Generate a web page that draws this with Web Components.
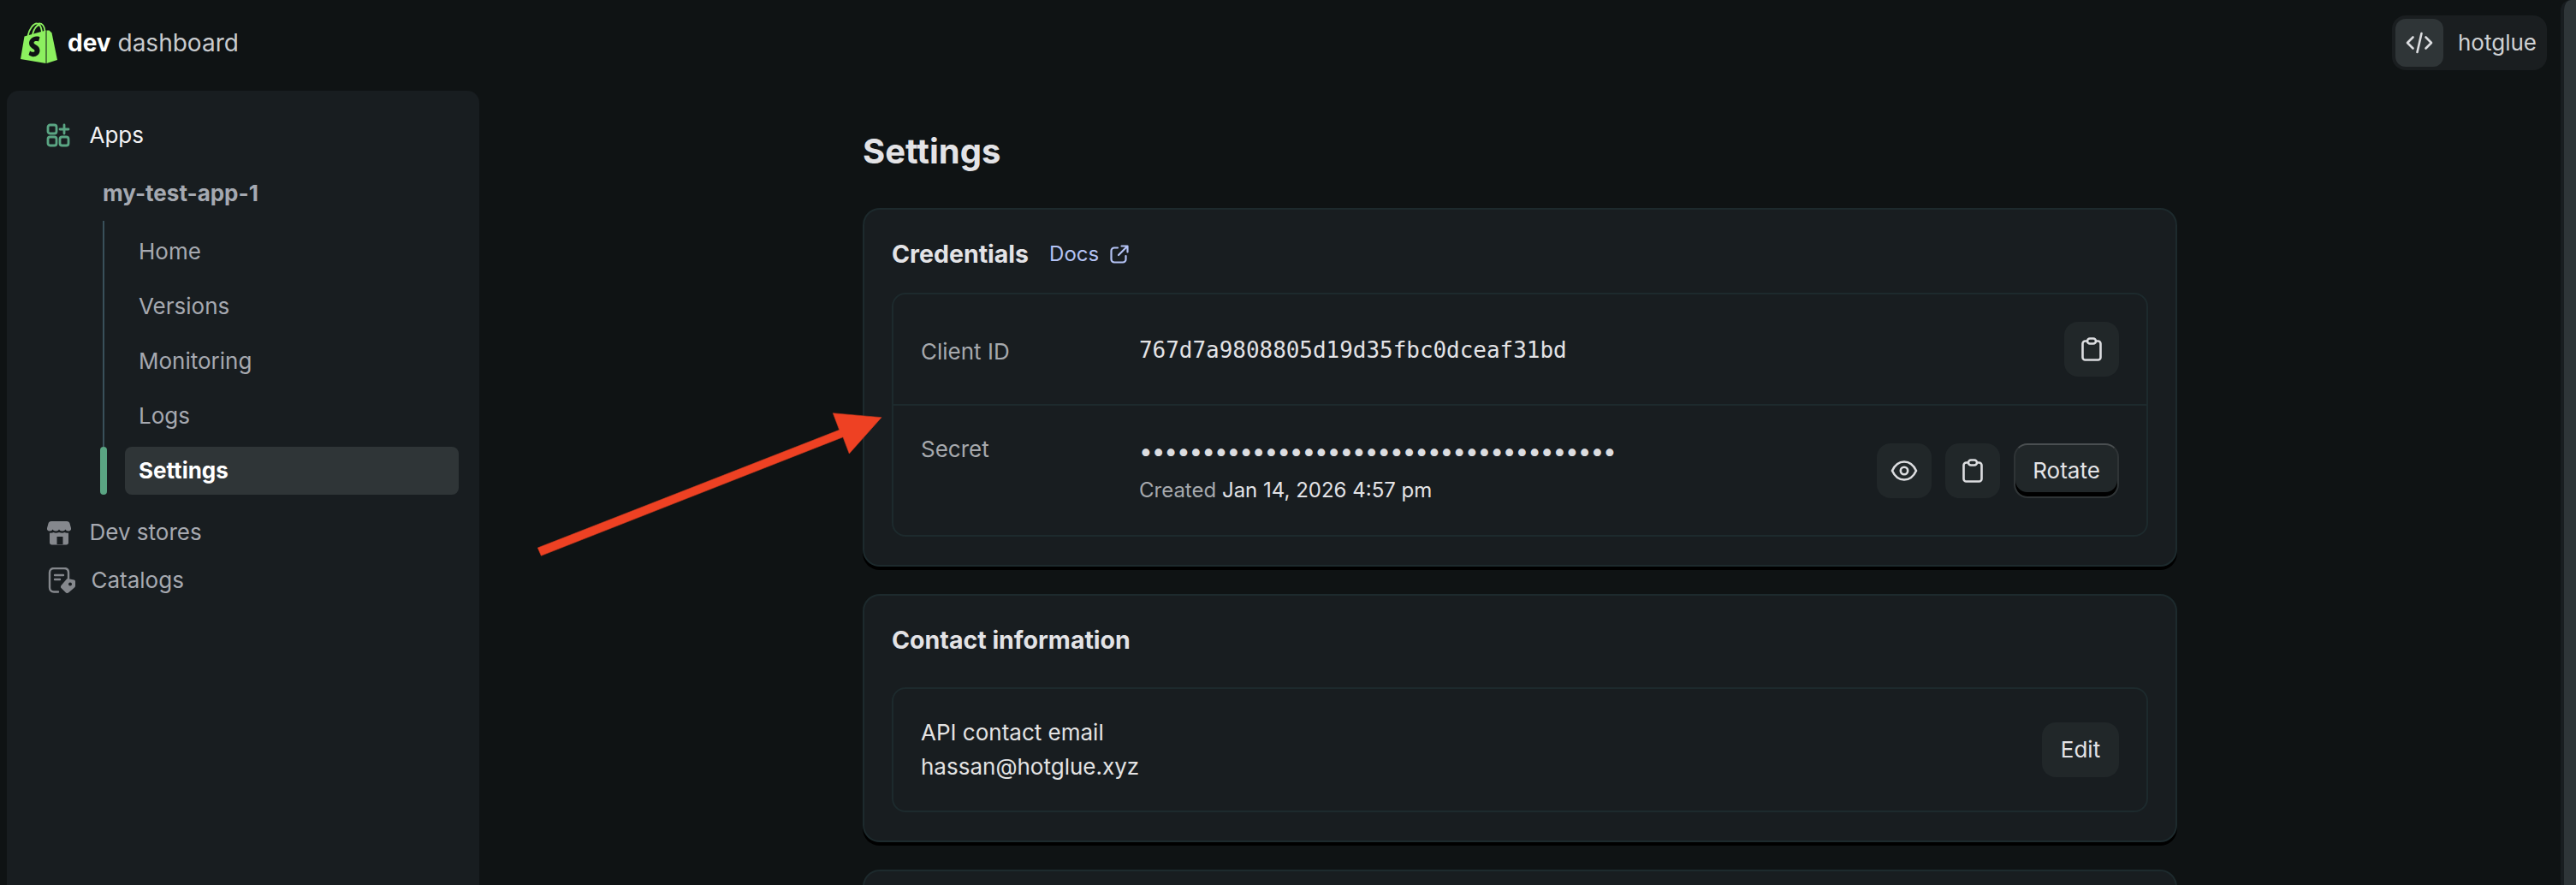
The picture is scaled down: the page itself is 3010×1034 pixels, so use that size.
<!doctype html>
<html>
<head>
<meta charset="utf-8">
<title>Settings</title>
<style>
  html, body { margin: 0; height: 100%; overflow: hidden; background: #0f1314; }
  body { font-family: Inter, "Liberation Sans", sans-serif; font-size: 26px; line-height: 40px; color: #e3e3e3; }
</style>
</head>
<body>

<template id="dash-shell-tpl">
  <style>
    :host { display: block; position: relative; width: 3010px; height: 1034px; overflow: hidden; }
    .top { display: flex; align-items: center; justify-content: space-between; height: 106px; padding: 0 34px 6px 24px; box-sizing: border-box; }
    .body { display: flex; padding-left: 8px; height: 928px; }
    .main { padding-left: 448px; }
    .edge { position: absolute; right: 0; top: 0; width: 18px; height: 1034px; box-sizing: border-box; background: #2e3538; border-left: 4px solid #181d20; border-top-left-radius: 12px; }
    .arrow { position: absolute; left: 0; top: 0; pointer-events: none; }
  </style>
  <div class="top"><slot name="logo"></slot><slot name="org"></slot></div>
  <div class="body"><slot name="side"></slot><div class="main"><slot></slot></div></div>
  <div class="edge"></div>
  <svg class="arrow" width="3010" height="1034"><polygon fill="#ee4123" stroke="#c93a20" stroke-width=".6" points="628.3,640 980.7,502.3 973.3,482.7 1030,487.7 992.3,530 985,510.7 632.3,649.3"/></svg>
</template>

<template id="dash-logo-tpl">
  <style>
    :host { display: flex; align-items: center; gap: 12px; font-size: 28px; line-height: 40px; color: #c9cbce; }
    svg { display: block; }
    b { font-weight: 700; color: #fff; }
  </style>
  <svg width="43" height="48" viewBox="0 0 43 48">
    <g fill="none" stroke="#8cf05f" stroke-width="1.800">
      <path d="M8.500 16C10 8 15 1.500 19 1.500 22 1.500 24 4 25 11"/>
      <path d="M14 14C16 7 19 3.500 22 3"/>
      <path d="M21 1.500C26 1 28 6 28.500 10.500"/>
    </g>
    <path fill="#8cf05f" d="M4.500 16.500 29.500 9.500V48L0 43Z"/>
    <path fill="#8cf05f" d="M30.500 9.500H33.500L36.500 12.500 43 44 30.500 48Z"/>
    <path fill="#0f1314" transform="translate(-1.500 0)" d="M24 17.500 L22.500 22.500 C20 21.500 17 22 17 24 C17 26 24 27 24 33 C24 38 19 41 15 40 C13 39.500 11.500 38.500 11 38 L12.500 33.500 C14 34.500 17.500 36 18 33.500 C18 31 11.500 30 11.500 24.500 C11.500 20 16 16 21 16.500 C22.500 16.500 23.500 17 24 17.500 Z"/>
  </svg>
  <span><b>dev</b> dashboard</span>
</template>

<template id="dash-org-tpl">
  <style>
    :host { display: flex; align-items: center; box-sizing: border-box; width: 181px; height: 64px; padding: 4px; gap: 17px; background: #1a1e20; border-radius: 16px; font-size: 26px; color: #cfd1d3; }
    .ic { width: 56px; height: 56px; border-radius: 12px; background: #2f3537; display: flex; align-items: center; justify-content: center; }
  </style>
  <div class="ic">
    <svg width="32" height="26" viewBox="0 0 32 26" fill="none" stroke="#dcdde0" stroke-width="2.600" stroke-linecap="round" stroke-linejoin="round"><path d="M8.500 6.500 2 13l6.500 6.500M23.500 6.500 30 13l-6.500 6.500M18.500 2l-5 22"/></svg>
  </div>
  <slot></slot>
</template>

<template id="dash-sidebar-tpl">
  <style>
    :host { display: block; box-sizing: border-box; width: 552px; height: 1000px; background: #181d20; border-radius: 14px; padding: 32px 24px 0 0; }
  </style>
  <slot></slot>
</template>

<template id="dash-top-item-tpl">
  <style>
    :host { display: flex; align-items: center; height: 40px; color: #a6a9b0; }
    .ic { width: 96.500px; padding-left: 46px; box-sizing: border-box; flex: none; display: flex; }
    :host([current]) { color: #f2f2f3; }
  </style>
  <div class="ic"><slot name="icon"></slot></div>
  <slot></slot>
</template>

<template id="dash-sub-nav-tpl">
  <style>
    :host { display: block; margin: 0 0 0 112px; }
    .title { height: 40px; margin: 28px 0 12px; font-weight: 700; color: #a5a9b1; }
    .list { display: flex; flex-direction: column; position: relative; }
    .list::before { content: ""; position: absolute; left: 0; top: 0; bottom: 56px; width: 2px; background: #39505a; }
  </style>
  <div class="title"><slot name="title"></slot></div>
  <div class="list"><slot></slot></div>
</template>

<template id="dash-sub-item-tpl">
  <style>
    :host { display: block; height: 56px; margin-top: 8px; box-sizing: border-box; position: relative; color: #a6a9b0; }
    :host(:first-child) { margin-top: 0; }
    .row { margin-left: 26px; height: 56px; padding-left: 16px; display: flex; align-items: center; border-radius: 8px; }
    :host([current]) .row { background: #2f3537; color: #fff; font-weight: 700; }
    :host([current])::before { content: ""; position: absolute; left: -3px; top: 0; width: 8px; height: 56px; border-radius: 4px; background: #5aa583; }
  </style>
  <div class="row"><slot></slot></div>
</template>

<template id="dash-card-tpl">
  <style>
    :host { display: block; box-sizing: border-box; width: 1536px; margin-bottom: 32px; padding: 32px 32px 33px; background: #181d20; border: 2px solid #1d2a2d; border-radius: 20px; box-shadow: 0 4px 0 #000; }
    .head { display: flex; align-items: center; gap: 24px; height: 40px; margin-bottom: var(--head-gap, 25px); font-weight: 700; font-size: 28.500px; color: #e3e3e6; }
  </style>
  <div class="head"><slot name="title"></slot><slot name="extra"></slot></div>
  <slot></slot>
</template>

<template id="dash-box-tpl">
  <style>
    :host { display: block; border: 2px solid #1d2a2d; border-radius: 16px; }
  </style>
  <slot></slot>
</template>

<template id="dash-row-tpl">
  <style>
    :host { display: flex; align-items: center; box-sizing: border-box; padding: 0 32px; height: var(--h, 130px); }
    :host(:not(:last-child)) { border-bottom: 2px solid #1d2a2d; }
    .label { width: 255px; flex: none; color: #a6a9ad; align-self: var(--la, center); padding-top: var(--lp, 6px); }
    .value { flex: 1; }
    .act { display: flex; gap: 16px; }
  </style>
  <div class="label"><slot name="label"></slot></div>
  <div class="value"><slot></slot></div>
  <div class="act"><slot name="actions"></slot></div>
</template>

<template id="dash-button-tpl">
  <style>
    :host { display: flex; align-items: center; justify-content: center; box-sizing: border-box; height: 64px; min-width: 64px; padding: 0; border-radius: 16px; background: #212729; color: #e3e3e6; font-size: 26px; }
    :host([text]) { width: 90px; }
    :host([raised]) { width: 123px; border: 2px solid #2f3436; border-top-color: #4a4f51; box-shadow: inset 0 -5px 0 #000; }
  </style>
  <slot></slot>
</template>

<dash-shell>
  <dash-logo slot="logo"></dash-logo>
  <dash-org slot="org">hotglue</dash-org>
  <dash-sidebar slot="side">
    <dash-top-item current>
      <svg slot="icon" width="28" height="28" viewBox="0 0 28 28" fill="none" stroke="#5aa583" stroke-width="2.800" stroke-linecap="round"><rect x="2" y="2" width="10" height="10" rx="2.500"/><rect x="2" y="16" width="10" height="10" rx="2.500"/><rect x="16" y="16" width="10" height="10" rx="2.500"/><path d="M21 2v10M16 7h10"/></svg>
      Apps
    </dash-top-item>
    <dash-sub-nav>
      <span slot="title">my-test-app-1</span>
      <dash-sub-item>Home</dash-sub-item>
      <dash-sub-item>Versions</dash-sub-item>
      <dash-sub-item>Monitoring</dash-sub-item>
      <dash-sub-item>Logs</dash-sub-item>
      <dash-sub-item current>Settings</dash-sub-item>
    </dash-sub-nav>
    <dash-top-item style="margin-top:24px">
      <svg slot="icon" width="30" height="30" viewBox="0 0 30 30" fill="#85888d"><path d="M6 2h18c2 0 3 1 3.500 2.500L29 10c.5 2-1 3.500-3 3.500-1.800 0-3-1-3.500-2-.7 1-2 2-3.800 2-1.700 0-3-1-3.700-2-.7 1-2 2-3.700 2-1.800 0-3.100-1-3.800-2-.5 1-1.700 2-3.500 2-2 0-3.500-1.500-3-3.500L2.500 4.500C3 3 4 2 6 2Z"/><path fill-rule="evenodd" d="M4 15.500c1 .3 3 .3 4.500-.5 2 1 3.500 1 6.500 0 3 1 4.500 1 6.500 0 1.500.8 3.500.8 4.500.5V27c0 1.500-1 2.500-2.500 2.500h-17C5 29.500 4 28.500 4 27ZM12.500 20v9h7v-9Z"/></svg>
      Dev stores
    </dash-top-item>
    <dash-top-item style="margin-top:16px">
      <svg slot="icon" width="32" height="30" viewBox="0 0 32 30" fill="none" stroke="#85888d" stroke-width="2.400" stroke-linecap="round" style="margin-left:2px;margin-right:-2px"><path d="M12 28.500H7c-3 0-5-2-5-5V6c0-3 2-5 5-5h12c3 0 5 2 5 5v7"/><path d="M8 9h10M8 14h6"/><path fill="#85888d" stroke="none" fill-rule="evenodd" d="M23 13l7.500 1.500c1 .2 1.500 1 1.500 2v5c0 .8-.3 1.500-1 2L24 29.500c-1 .7-2.300.7-3 0L15.500 24c-.8-.8-.7-2 0-3l6-7c.4-.6 1-1 1.500-1Zm3 4.500a2 2 0 1 0 0 4 2 2 0 0 0 0-4Z"/></svg>
      <span style="margin-left:2px">Catalogs</span>
    </dash-top-item>
  </dash-sidebar>

  <dash-heading>Settings</dash-heading>

  <dash-card>
    <span slot="title">Credentials</span>
    <dash-link slot="extra">Docs</dash-link>
    <dash-box>
      <dash-row>
        <span slot="label">Client ID</span>
        <dash-mono>767d7a9808805d19d35fbc0dceaf31bd</dash-mono>
        <dash-button slot="actions"><dash-clip></dash-clip></dash-button>
      </dash-row>
      <dash-row style="--h:151px;--la:flex-start;--lp:31px">
        <span slot="label">Secret</span>
        <dash-secret>Jan 14, 2026 4:57 pm</dash-secret>
        <dash-button slot="actions">
          <svg width="32" height="26" viewBox="0 0 32 26" fill="none" stroke="#dcdde0" stroke-width="2.600"><path d="M2 13C5 6.500 10 2.500 16 2.500S27 6.500 30 13c-3 6.500-8 10.500-14 10.500S5 19.500 2 13Z"/><circle cx="16" cy="13" r="4.200"/></svg>
        </dash-button>
        <dash-button slot="actions"><dash-clip></dash-clip></dash-button>
        <dash-button slot="actions" text raised>Rotate</dash-button>
      </dash-row>
    </dash-box>
  </dash-card>

  <dash-card style="--head-gap:35px">
    <span slot="title">Contact information</span>
    <dash-box>
      <dash-row style="--h:142px;--lp:0">
        <div style="margin-left:-255px">API contact email<br>hassan@hotglue.xyz</div>
        <dash-button slot="actions" text>Edit</dash-button>
      </dash-row>
    </dash-box>
  </dash-card>

  <dash-card style="height:200px"></dash-card>
</dash-shell>

<script>
  function register(name, tplId) {
    let template = document.getElementById(tplId)
    class El extends HTMLElement {
      constructor() {
        super()
        this.attachShadow({mode: 'open'}).appendChild(template.content.cloneNode(true))
      }
    }
    customElements.define(name, El)
  }

  function registerHtml(name, html) {
    class El extends HTMLElement {
      constructor() {
        super()
        this.attachShadow({mode: 'open'}).innerHTML = html
      }
    }
    customElements.define(name, El)
  }

  register('dash-shell', 'dash-shell-tpl')
  register('dash-logo', 'dash-logo-tpl')
  register('dash-org', 'dash-org-tpl')
  register('dash-sidebar', 'dash-sidebar-tpl')
  register('dash-top-item', 'dash-top-item-tpl')
  register('dash-sub-nav', 'dash-sub-nav-tpl')
  register('dash-sub-item', 'dash-sub-item-tpl')
  register('dash-card', 'dash-card-tpl')
  register('dash-box', 'dash-box-tpl')
  register('dash-row', 'dash-row-tpl')
  register('dash-button', 'dash-button-tpl')

  registerHtml('dash-heading', `
    <style>:host { display: block; height: 137px; box-sizing: border-box; padding-top: 51px; font-size: 40px; line-height: 40px; font-weight: 700; color: #e3e3e6; }</style>
    <slot></slot>`)

  registerHtml('dash-link', `
    <style>
      :host { display: inline-flex; align-items: center; gap: 13px; font-size: 24px; font-weight: 400; color: #b4c3f5; }
      svg { display: block; }
    </style>
    <slot></slot>
    <svg width="22" height="22" viewBox="0 0 22 22" fill="none" stroke="#b4c3f5" stroke-width="2.200" stroke-linecap="round" stroke-linejoin="round"><path d="M9 3.500H5a3.500 3.500 0 0 0-3.500 3.500v10A3.500 3.500 0 0 0 5 20.500h10a3.500 3.500 0 0 0 3.500-3.500v-4"/><path d="M10 12 20 2M13.500 1.500H20.500V8.500"/></svg>`)

  registerHtml('dash-mono', `
    <style>:host { display: block; font-family: "DejaVu Sans Mono", "Liberation Mono", monospace; font-size: 26px; letter-spacing: -.04px; color: #e3e3e6; margin-top: 2px; }</style>
    <slot></slot>`)

  registerHtml('dash-secret', `
    <style>
      :host { display: block; }
      .dots { font-size: 28px; line-height: 40px; letter-spacing: -1.100px; color: #dcdde0; }
      .meta { margin-top: 6px; font-size: 24px; color: #a6a9ad; }
      .meta span { color: #e3e3e6; }
    </style>
    <div class="dots">••••••••••••••••••••••••••••••••••••••</div>
    <div class="meta">Created <span><slot></slot></span></div>`)

  registerHtml('dash-clip', `
    <style>:host { display: flex; } svg { display: block; }</style>
    <svg width="24" height="28" viewBox="0 0 24 28" fill="none" stroke="#dcdde0" stroke-width="2.600" stroke-linejoin="round"><path d="M7 4.500H4.500A3 3 0 0 0 1.500 7.500v16a3 3 0 0 0 3 3h15a3 3 0 0 0 3-3v-16a3 3 0 0 0-3-3H17"/><rect x="7" y="1.500" width="10" height="6" rx="3"/></svg>`)
</script>
</body>
</html>
